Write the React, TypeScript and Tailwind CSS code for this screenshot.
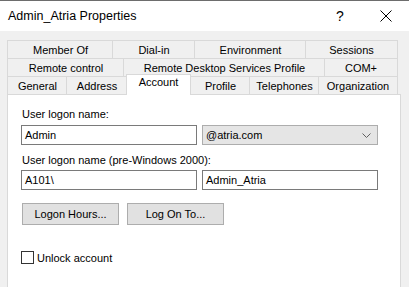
import React from 'react';

const row1 = [
  { label: 'Member Of', w: 105 },
  { label: 'Dial-in', w: 82 },
  { label: 'Environment', w: 111 },
  { label: 'Sessions', w: 92 },
];

const row2 = [
  { label: 'Remote control', w: 116 },
  { label: 'Remote Desktop Services Profile', w: 201 },
  { label: 'COM+', w: 73 },
];

const row3 = [
  { label: 'General', w: 59 },
  { label: 'Address', w: 60 },
  { label: 'Account', w: 64, active: true },
  { label: 'Profile', w: 59 },
  { label: 'Telephones', w: 69 },
  { label: 'Organization', w: 79 },
];

type Tab = { label: string; w: number; active?: boolean };

function TabRow({ tabs }: { tabs: Tab[] }) {
  return (
    <div className="flex items-start h-[18px]">
      {tabs.map((t, i) =>
        t.active ? (
          <div
            key={t.label}
            style={{ width: t.w + 1 }}
            className="relative z-10 -mt-[2px] h-[21px] -ml-px bg-white border-t border-l border-r border-[#d9d9d9] flex justify-center pt-[1px] leading-[13px]"
          >
            {t.label}
          </div>
        ) : (
          <div
            key={t.label}
            style={{ width: t.w + 1 }}
            className={`h-[18px] -ml-px border-t border-l border-[#d9d9d9] flex items-center justify-center leading-[13px] pt-[2px] ${
              i === tabs.length - 1 ? 'border-r' : ''
            }`}
          >
            {t.label}
          </div>
        )
      )}
    </div>
  );
}

function TextBox({ value }: { value: string }) {
  return (
    <div className="w-[176px] h-[20px] border border-[#7a7a7a] bg-white flex items-center pl-[3px] pt-[1px]">
      {value}
    </div>
  );
}

function Button({ label }: { label: string }) {
  return (
    <div className="w-[97px] h-[22px] border border-[#adadad] bg-[#e1e1e1] flex items-center justify-center pt-[1px]">
      {label}
    </div>
  );
}

export default function App() {
  return (
    <div
      className="w-[409px] h-[287px] overflow-hidden bg-[#f0f0f0] text-[11px] text-black"
      style={{ fontFamily: '"Liberation Sans", Arial, sans-serif' }}
    >
      <div className="h-[31px] bg-white border-t border-[#6d6d6d] flex items-center justify-between">
        <span className="pl-[8px] text-[12.5px]">Admin_Atria Properties</span>
        <div className="flex items-center">
          <span className="w-[46px] text-center text-[14px]">?</span>
          <svg width="46" height="14" viewBox="0 0 46 14">
            <path d="M17.5 1.5 L28.5 12.5 M28.5 1.5 L17.5 12.5" stroke="#000" strokeWidth="1" />
          </svg>
        </div>
      </div>

      <div className="pt-[9px] pl-[8px]">
        <TabRow tabs={row1} />
        <TabRow tabs={row2} />
        <TabRow tabs={row3} />
      </div>

      <div className="ml-[7px] w-[394px] h-[200px] bg-white border border-[#d9d9d9] pl-[13px] pt-[13px]">
        <div className="ml-[1px] h-[13px] leading-[13px] mb-[4px]">User logon name:</div>
        <div className="flex gap-[5px]">
          <TextBox value="Admin" />
          <div className="w-[176px] h-[20px] border border-[#adadad] bg-[#e5e5e5] flex items-center justify-between pl-[3px] pr-[6px] pt-[1px]">
            <span>@atria.com</span>
            <svg width="9" height="5" viewBox="0 0 9 5">
              <path d="M0.5 0.5 L4.5 4.5 L8.5 0.5" stroke="#606060" fill="none" strokeWidth="1" />
            </svg>
          </div>
        </div>
        <div className="ml-[1px] mt-[9px] h-[13px] leading-[13px] mb-[3px]">User logon name (pre-Windows 2000):</div>
        <div className="flex gap-[5px]">
          <TextBox value="A101\" />
          <TextBox value="Admin_Atria" />
        </div>
        <div className="flex gap-[8px] mt-[13px] ml-[1px]">
          <Button label="Logon Hours..." />
          <Button label="Log On To..." />
        </div>
        <div className="flex items-center mt-[24px]">
          <div className="w-[13px] h-[13px] border border-[#333] bg-white" />
          <span className="ml-[3px] pt-[1px]">Unlock account</span>
        </div>
      </div>
    </div>
  );
}
